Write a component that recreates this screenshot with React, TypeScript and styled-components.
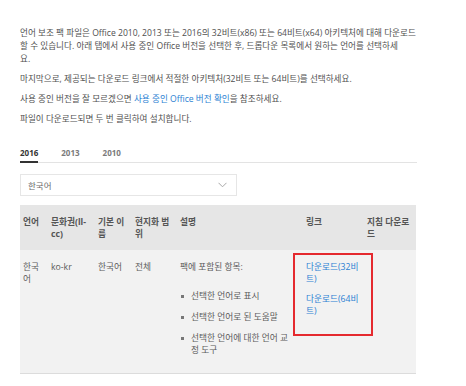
import styled, { createGlobalStyle } from "styled-components";

const GlobalStyle = createGlobalStyle`
  body {
    margin: 0;
    background: #ffffff;
    font-family: "Open Sans", "Noto Sans CJK KR", sans-serif;
    color: #505050;
  }
`;

const Page = styled.div`
  width: 397px;
  padding: 27px 0 0 20px;
`;

const Para = styled.p`
  margin: 0 0 7px;
  font-size: 8.6px;
  line-height: 13px;
  color: #505050;
`;

const Link = styled.a`
  color: #2b7fd3;
  text-decoration: none;
`;

const Tabs = styled.div`
  display: flex;
  gap: 23px;
  margin-top: 20px;
  border-bottom: 1px solid #e3e3e3;
  width: 397px;
`;

const Tab = styled.div<{ $active?: boolean }>`
  font-size: 8px;
  font-weight: 700;
  line-height: 12px;
  padding: 1px 0 2px;
  color: ${(p) => (p.$active ? "#333" : "#7a7a7a")};
  border-bottom: 2px solid ${(p) => (p.$active ? "#333" : "transparent")};
  margin-bottom: -1px;
`;

const Select = styled.div`
  display: flex;
  align-items: center;
  justify-content: space-between;
  box-sizing: border-box;
  width: 217px;
  height: 22px;
  margin-top: 11px;
  padding: 0 9px 0 7px;
  border: 1px solid #e6e6e6;
  font-size: 8.5px;
  color: #6a6a6a;
`;

const Table = styled.table`
  margin-top: 9px;
  width: 396px;
  border-collapse: collapse;
  table-layout: fixed;
  font-size: 8.7px;
  line-height: 12px;
`;

const HeadRow = styled.tr`
  background: #e6e6e6;
`;

const Th = styled.th<{ $w: number }>`
  width: ${(p) => p.$w}px;
  text-align: left;
  vertical-align: top;
  font-weight: 700;
  color: #555;
  padding: 11px 3px 10px;
  box-sizing: border-box;
`;

const BodyRow = styled.tr`
  background: #f2f2f2;
  border-bottom: 1px solid #dcdcdc;
`;

const Td = styled.td<{ $padRight?: number }>`
  vertical-align: top;
  color: #5a5a5a;
  padding: 11px ${(p) => p.$padRight ?? 3}px 0 3px;
  height: 123px;
  box-sizing: border-box;
`;

const LinkCell = styled(Td)`
  position: relative;
`;

const Bullets = styled.ul`
  list-style: none;
  margin: 17px 0 0;
  padding: 0;
`;

const Bullet = styled.li`
  position: relative;
  padding-left: 11px;
  margin-bottom: 9px;

  &::before {
    content: "";
    position: absolute;
    left: 1px;
    top: 5px;
    width: 3px;
    height: 3px;
    background: #777;
  }
`;

const DownloadLink = styled(Link)`
  display: block;
  margin-bottom: 8px;
`;

const Highlight = styled.div`
  position: absolute;
  left: -10px;
  top: 3px;
  width: 80px;
  height: 83px;
  box-sizing: border-box;
  border: 2px solid #e52a2f;
  pointer-events: none;
`;

const Chevron = () => (
  <svg width="9" height="6" viewBox="0 0 9 6">
    <path d="M0.5 0.8 L4.5 4.8 L8.5 0.8" fill="none" stroke="#a8a8a8" strokeWidth="1" />
  </svg>
);

const cols = [28, 47, 37, 45, 126, 61, 52];
const heads = ["언어", "문화권(ll-cc)", "기본 이름", "현지화 범위", "설명", "링크", "지침 다운로드"];

export default function App() {
  return (
    <Page>
      <GlobalStyle />
      <Para>
        언어 보조 팩 파일은 Office 2010, 2013 또는 2016의 32비트(x86) 또는 64비트(x64) 아키텍처에 대해 다운로드
        할 수 있습니다. 아래 탭에서 사용 중인 Office 버전을 선택한 후, 드롭다운 목록에서 원하는 언어를 선택하세
        <br />요.
      </Para>
      <Para>마지막으로, 제공되는 다운로드 링크에서 적절한 아키텍처(32비트 또는 64비트)를 선택하세요.</Para>
      <Para>
        사용 중인 버전을 잘 모르겠으면 <Link href="#">사용 중인 Office 버전 확인</Link>을 참조하세요.
      </Para>
      <Para>파일이 다운로드되면 두 번 클릭하여 설치합니다.</Para>

      <Tabs>
        <Tab $active>2016</Tab>
        <Tab>2013</Tab>
        <Tab>2010</Tab>
      </Tabs>

      <Select>
        <span>한국어</span>
        <Chevron />
      </Select>

      <Table>
        <thead>
          <HeadRow>
            {heads.map((h, i) => (
              <Th key={h} $w={cols[i]}>
                {h}
              </Th>
            ))}
          </HeadRow>
        </thead>
        <tbody>
          <BodyRow>
            <Td>한국어</Td>
            <Td>ko-kr</Td>
            <Td>한국어</Td>
            <Td>전체</Td>
            <Td $padRight={14}>
              팩에 포함된 항목:
              <Bullets>
                <Bullet>선택한 언어로 표시</Bullet>
                <Bullet>선택한 언어로 된 도움말</Bullet>
                <Bullet>선택한 언어에 대한 언어 교정 도구</Bullet>
              </Bullets>
            </Td>
            <LinkCell>
              <DownloadLink href="#">다운로드(32비트)</DownloadLink>
              <DownloadLink href="#">다운로드(64비트)</DownloadLink>
              <Highlight />
            </LinkCell>
            <Td />
          </BodyRow>
        </tbody>
      </Table>
    </Page>
  );
}
